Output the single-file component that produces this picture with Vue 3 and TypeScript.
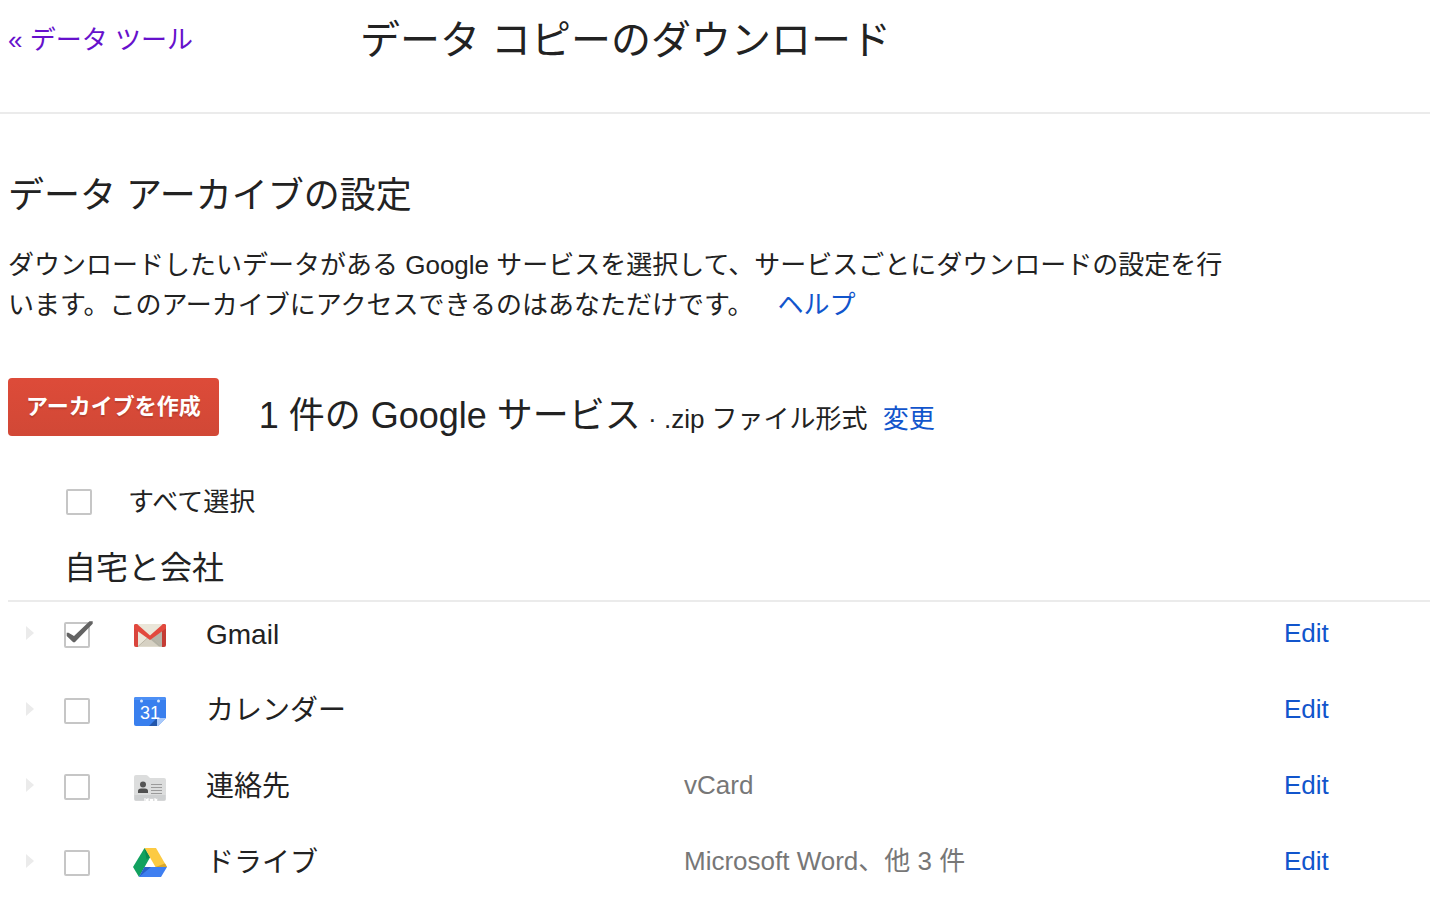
<script setup lang="ts">
import { ref } from 'vue'

interface Service {
  id: string
  name: string
  format: string
  selected: boolean
}

const services = ref<Service[]>([
  { id: 'gmail', name: 'Gmail', format: '', selected: true },
  { id: 'calendar', name: 'カレンダー', format: '', selected: false },
  { id: 'contacts', name: '連絡先', format: 'vCard', selected: false },
  { id: 'drive', name: 'ドライブ', format: 'Microsoft Word、他 3 件', selected: false },
])
const all = ref(false)

function toggleAll(): void {
  services.value.forEach((s) => (s.selected = all.value))
}
</script>

<template>
  <div class="page">
    <header class="top">
      <a class="back" href="#">« データ ツール</a>
      <h1>データ コピーのダウンロード</h1>
    </header>
    <main>
      <h2>データ アーカイブの設定</h2>
      <p class="intro">
        ダウンロードしたいデータがある Google サービスを選択して、サービスごとにダウンロードの設定を行います。このアーカイブにアクセスできるのはあなただけです。<a class="help" href="#">ヘルプ</a>
      </p>
      <div class="actions">
        <button class="create" type="button">アーカイブを作成</button>
        <p class="summary"><span class="count">1 件の Google サービス</span> · .zip ファイル形式 <a class="change" href="#">変更</a></p>
      </div>
      <label class="select-all">
        <span class="tick"><input v-model="all" type="checkbox" @change="toggleAll" /></span>
        <span>すべて選択</span>
      </label>
      <h3>自宅と会社</h3>
      <table>
        <tbody>
          <tr v-for="s in services" :key="s.id">
            <td class="c-arrow">
              <button class="expand" type="button" :aria-label="s.name + 'の詳細'">
                <svg width="8" height="14" viewBox="0 0 8 14"><path d="M0 0L8 7L0 14Z" fill="#ebebeb" /></svg>
              </button>
            </td>
            <td class="c-check">
              <span class="tick">
                <input :id="s.id" v-model="s.selected" type="checkbox" />
                <svg v-if="s.selected" class="mark" width="30" height="26" viewBox="0 0 30 26">
                  <path d="M2.700 12.800H4.500L10 16L25.500 1.300H28.700V3.800L10.800 22.300H9.200L2.700 16Z" fill="#636363" />
                </svg>
              </span>
            </td>
            <td class="c-icon">
              <svg v-if="s.id === 'gmail'" class="icon" width="34" height="34" viewBox="0 0 34 34">
                <rect x="1" y="6" width="32" height="23" rx="2" fill="#eae6d9" />
                <path d="M5 28.500L17 18L29 28.500Z" fill="#d6d1c3" />
                <path d="M17 21L29 10V28.500H26Z" fill="#aaa99c" opacity=".8" />
                <path d="M5 28.500L15 19.500M29 28.500L19 19.500" stroke="#bcb7a8" stroke-width="1" />
                <path d="M1 8Q1 6 3 6L5 7V29H3Q1 29 1 27Z" fill="#d9453c" />
                <path d="M33 8Q33 6 31 6L29 7V29H31Q33 29 33 27Z" fill="#c43c34" />
                <path d="M1 8Q1 5.500 4 6L17 17.500L30 6Q33 5.500 33 8V10.500L17 22L1 10.500Z" fill="#e2493e" />
              </svg>
              <svg v-else-if="s.id === 'calendar'" class="icon" width="34" height="34" viewBox="0 0 34 34">
                <path d="M3 3H31Q33 3 33 5V24L25 32H3Q1 32 1 30V5Q1 3 3 3Z" fill="#397fee" />
                <path d="M3 3H31Q33 3 33 5V6H1V5Q1 3 3 3Z" fill="#4c8ff5" />
                <path d="M24 24V32H16Z" fill="#2256ab" />
                <path d="M24 24H33L25 32H24Z" fill="#a9c9fa" />
                <circle cx="8.500" cy="7" r="1.500" fill="#d7e6fc" />
                <circle cx="25.500" cy="7" r="1.500" fill="#d7e6fc" />
                <text x="17" y="25" text-anchor="middle" class="day">31</text>
              </svg>
              <svg v-else-if="s.id === 'contacts'" class="icon" width="34" height="34" viewBox="0 0 34 34">
                <path d="M1 7Q1 5 3 5H13Q14 5 15 6L17 8H31Q33 8 33 10V29Q33 31 31 31H24V29H22V31H20V29H17V31H15V29H13V31H3Q1 31 1 29Z" fill="#dcdddd" />
                <path d="M1.500 25V29Q1.500 30.500 3 30.500H11V28.500H25V30.500H31Q32.500 30.500 32.500 29V25" fill="#ced0d1" />
                <path d="M12 28V31M15 28V31M22 28V31" stroke="#fff" stroke-width="1" />
                <circle cx="10" cy="14.500" r="3" fill="#555" />
                <path d="M5 23V21Q5 18.500 8 18.500H12Q15 18.500 15 21V23Z" fill="#505050" />
                <path d="M18 14.500H29M18 17.500H29M18 20.500H29M18 23.500H29" stroke="#9b9b9b" stroke-width="1" />
              </svg>
              <svg v-else class="icon" width="34" height="34" viewBox="0 1 34 34">
                <path d="M11.500 3L17 12.500L6 32L0 22Z" fill="#11a15f" />
                <path d="M11.500 3H23L34 22H22.500Z" fill="#fcca42" />
                <path d="M11.500 22H34L28 32H6Z" fill="#3f7ff1" />
                <path d="M22.500 22L32 18.500L34 22Z" fill="#d9a72d" />
                <path d="M6 32L11.500 22H18Z" fill="#2961c8" />
                <path d="M11.500 3L17 12.500L13.500 14Z" fill="#0b8a50" />
              </svg>
            </td>
            <th class="c-name" scope="row"><label :for="s.id">{{ s.name }}</label></th>
            <td class="c-format">{{ s.format }}</td>
            <td class="c-edit"><a href="#">Edit</a></td>
          </tr>
        </tbody>
      </table>
    </main>
  </div>
</template>

<style>
body {
  margin: 0;
  background: #fff;
}
</style>

<style scoped>
.page {
  font-family: "Liberation Sans", "Noto Sans CJK JP", sans-serif;
  font-size: 26px;
  line-height: 40px;
  color: #222;
}
h1, h2, h3, p {
  margin: 0;
  font-weight: 400;
}
a {
  color: #15c;
  text-decoration: none;
}
.top {
  display: flex;
  align-items: flex-start;
  height: 92px;
  padding: 20px 8px 0;
  border-bottom: 2px solid #ebebeb;
}
.back {
  width: 352px;
  color: #61c;
}
h1 {
  font-size: 40px;
  line-height: 40px;
}
main {
  padding: 62px 0 0 8px;
}
h2 {
  font-size: 36px;
  line-height: 40px;
}
.intro {
  max-width: 1220px;
  margin-top: 29px;
}
.help {
  margin-left: 24px;
}
.actions {
  display: flex;
  align-items: flex-start;
  gap: 40px;
  margin-top: 53px;
}
.create {
  height: 58px;
  padding: 0 18px 6px;
  border: 0;
  border-radius: 4px;
  background: linear-gradient(#dd4b39, #d14836);
  color: #fff;
  font: bold 22px "Liberation Sans", "Noto Sans CJK JP", sans-serif;
  text-shadow: 0 2px 1px rgba(0, 0, 0, 0.15);
}
.summary {
  padding-top: 18px;
}
.count {
  font-size: 36px;
}
.change {
  margin-left: 8px;
}
.select-all {
  display: flex;
  align-items: center;
  gap: 36px;
  margin: 43px 0 0 58px;
}
.tick {
  position: relative;
  display: block;
  width: 26px;
  height: 26px;
}
input {
  appearance: none;
  box-sizing: border-box;
  display: block;
  width: 26px;
  height: 26px;
  margin: 0;
  border: 2px solid #c6c6c6;
  border-radius: 2px;
  background: #fff;
}
.mark {
  position: absolute;
  left: 0;
  top: -2px;
  pointer-events: none;
}
h3 {
  padding: 26px 0 12px 56px;
  font-size: 32px;
  line-height: 40px;
  border-bottom: 2px solid #ebebeb;
}
table {
  width: 100%;
  table-layout: fixed;
  border-collapse: collapse;
}
tr {
  height: 76px;
}
td, th {
  padding: 0 0 10px;
  vertical-align: middle;
  text-align: left;
  font-weight: 400;
}
.c-arrow {
  width: 56px;
  padding-bottom: 14px;
}
.c-check {
  width: 69px;
}
.c-icon {
  width: 73px;
}
.c-name {
  width: 478px;
  font-size: 28px;
}
.c-format {
  color: #777;
  padding-bottom: 14px;
}
.c-edit {
  width: 146px;
  padding-bottom: 14px;
}
.expand {
  display: block;
  margin: 0 0 0 18px;
  padding: 0;
  border: 0;
  background: none;
}
.expand svg, .icon {
  display: block;
}
.day {
  font: 18px "Liberation Sans", sans-serif;
  fill: #fff;
}
</style>
